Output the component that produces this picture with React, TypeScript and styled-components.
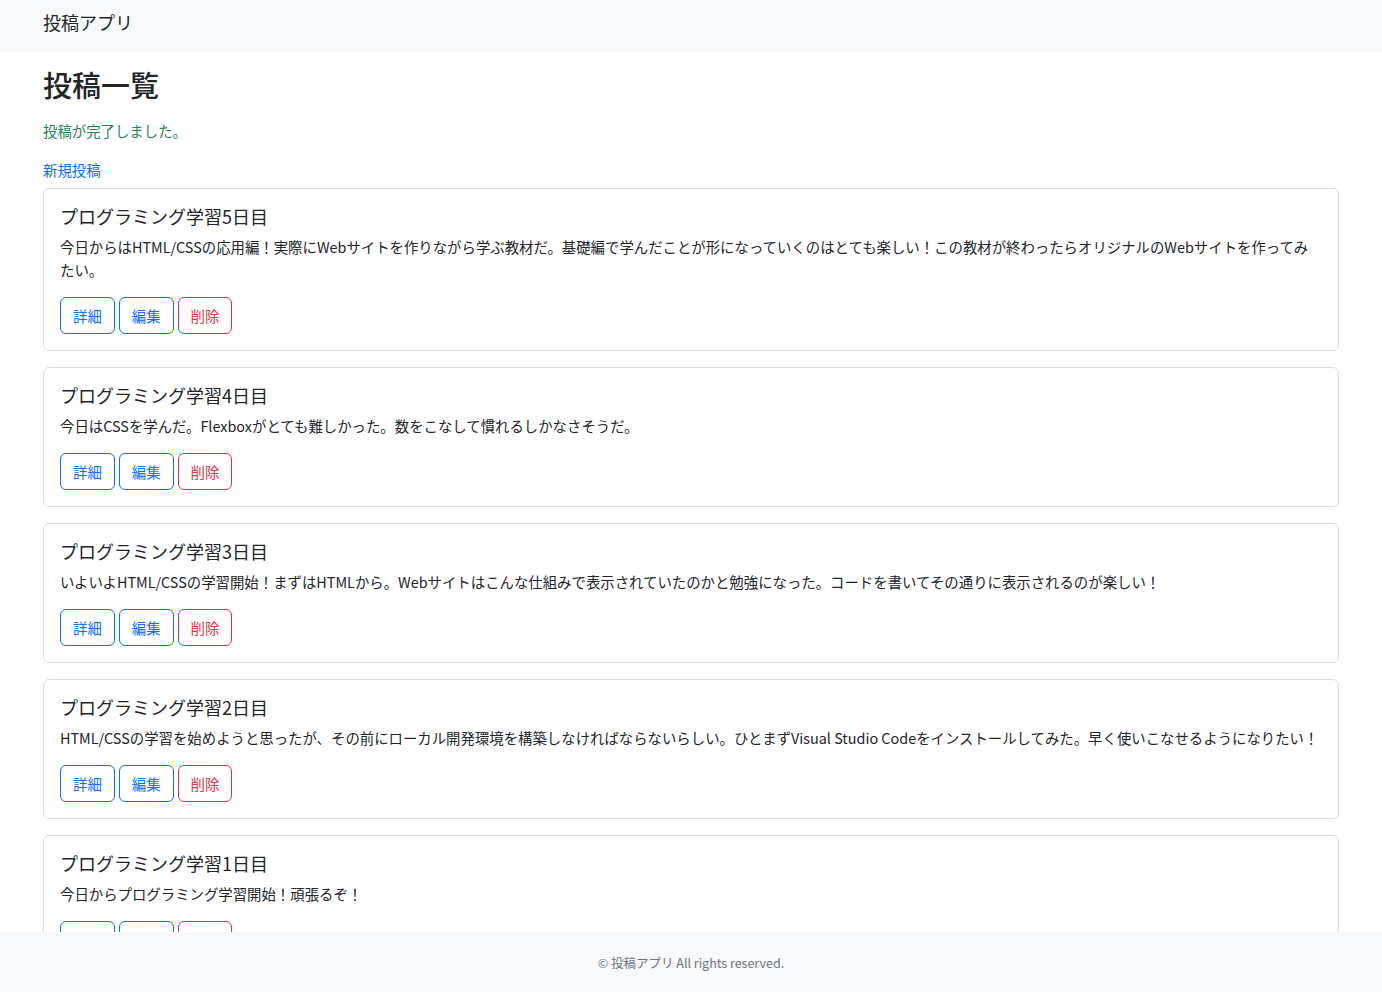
import React from "react";
import styled, {createGlobalStyle} from "styled-components";

const colorText = "#212529";
const colorMuted = "#6c757d";
const colorLight = "#f8f9fa";
const colorPrimary = "#0d6efd";
const colorDanger = "#dc3545";
const colorSuccess = "#198754";

const GlobalStyle = createGlobalStyle`
    * {
        box-sizing: border-box;
    }
    html, body {
        margin: 0;
        padding: 0;
        background: #ffffff;
        color: ${colorText};
        font-family: "Noto Sans CJK JP", "Noto Sans", sans-serif;
        font-size: 14.4px;
        line-height: 23px;
    }
`

const Page = styled.div`
    display: flex;
    flex-direction: column;
    height: 100vh;
    overflow: hidden;
`

const Header = styled.header`
    flex: 0 0 52px;
    padding: 11px 43px 0;
    background-color: ${colorLight};
`

const Brand = styled.div`
    font-size: 18px;
    line-height: 22px;
    color: ${colorText};
`

const Main = styled.main`
    flex: 1;
    overflow: hidden;
    padding: 15px 43px 0;
`

const Title = styled.h1`
    margin: 0 0 18px;
    font-size: 29px;
    line-height: 34px;
    font-weight: 500;
`

const Notice = styled.p`
    margin: 0 0 16px;
    color: ${colorSuccess};
`

const NewLink = styled.a`
    display: block;
    margin-bottom: 7px;
    color: ${colorPrimary};
    text-decoration: none;
`

const PostList = styled.div`
    display: flex;
    flex-direction: column;
    gap: 16px;
`

const Card = styled.div`
    border: 1px solid #dadde0;
    border-radius: 6px;
    padding: 16px;
    background: #ffffff;
`

const CardTitle = styled.h5`
    margin: 0 0 8px;
    font-size: 18px;
    line-height: 22px;
    font-weight: 400;
`

const CardText = styled.p`
    margin: 0 0 16px;
`

const Actions = styled.div`
    display: flex;
    gap: 4px;
`

type ButtonProps = {
    $danger?: boolean
}
const OutlineButton = styled.button<ButtonProps>`
    height: 37px;
    padding: 6px 12px;
    border-radius: 6px;
    font-family: inherit;
    font-size: 14.4px;
    line-height: 23px;
    background: transparent;
    color: ${props => props.$danger ? colorDanger : colorPrimary};
    border: 1px solid ${props => props.$danger ? colorDanger : colorPrimary};
    cursor: pointer;
`

const Footer = styled.footer`
    flex: 0 0 60px;
    display: flex;
    align-items: center;
    justify-content: center;
    background-color: ${colorLight};
    color: ${colorMuted};
    font-size: 12.5px;
`

const posts = [
    {
        id: 5,
        title: "プログラミング学習5日目",
        body: "今日からはHTML/CSSの応用編！実際にWebサイトを作りながら学ぶ教材だ。基礎編で学んだことが形になっていくのはとても楽しい！この教材が終わったらオリジナルのWebサイトを作ってみたい。"
    },
    {
        id: 4,
        title: "プログラミング学習4日目",
        body: "今日はCSSを学んだ。Flexboxがとても難しかった。数をこなして慣れるしかなさそうだ。"
    },
    {
        id: 3,
        title: "プログラミング学習3日目",
        body: "いよいよHTML/CSSの学習開始！まずはHTMLから。Webサイトはこんな仕組みで表示されていたのかと勉強になった。コードを書いてその通りに表示されるのが楽しい！"
    },
    {
        id: 2,
        title: "プログラミング学習2日目",
        body: "HTML/CSSの学習を始めようと思ったが、その前にローカル開発環境を構築しなければならないらしい。ひとまずVisual Studio Codeをインストールしてみた。早く使いこなせるようになりたい！"
    },
    {
        id: 1,
        title: "プログラミング学習1日目",
        body: "今日からプログラミング学習開始！頑張るぞ！"
    }
];

export default function App(): React.ReactElement {
    return <>
        <GlobalStyle/>
        <Page>
            <Header>
                <Brand>投稿アプリ</Brand>
            </Header>
            <Main>
                <Title>投稿一覧</Title>
                <Notice>投稿が完了しました。</Notice>
                <NewLink href="#">新規投稿</NewLink>
                <PostList>
                    {posts.map(post => <Card key={post.id}>
                        <CardTitle>{post.title}</CardTitle>
                        <CardText>{post.body}</CardText>
                        <Actions>
                            <OutlineButton>詳細</OutlineButton>
                            <OutlineButton>編集</OutlineButton>
                            <OutlineButton $danger>削除</OutlineButton>
                        </Actions>
                    </Card>)}
                </PostList>
            </Main>
            <Footer>© 投稿アプリ All rights reserved.</Footer>
        </Page>
    </>
}
